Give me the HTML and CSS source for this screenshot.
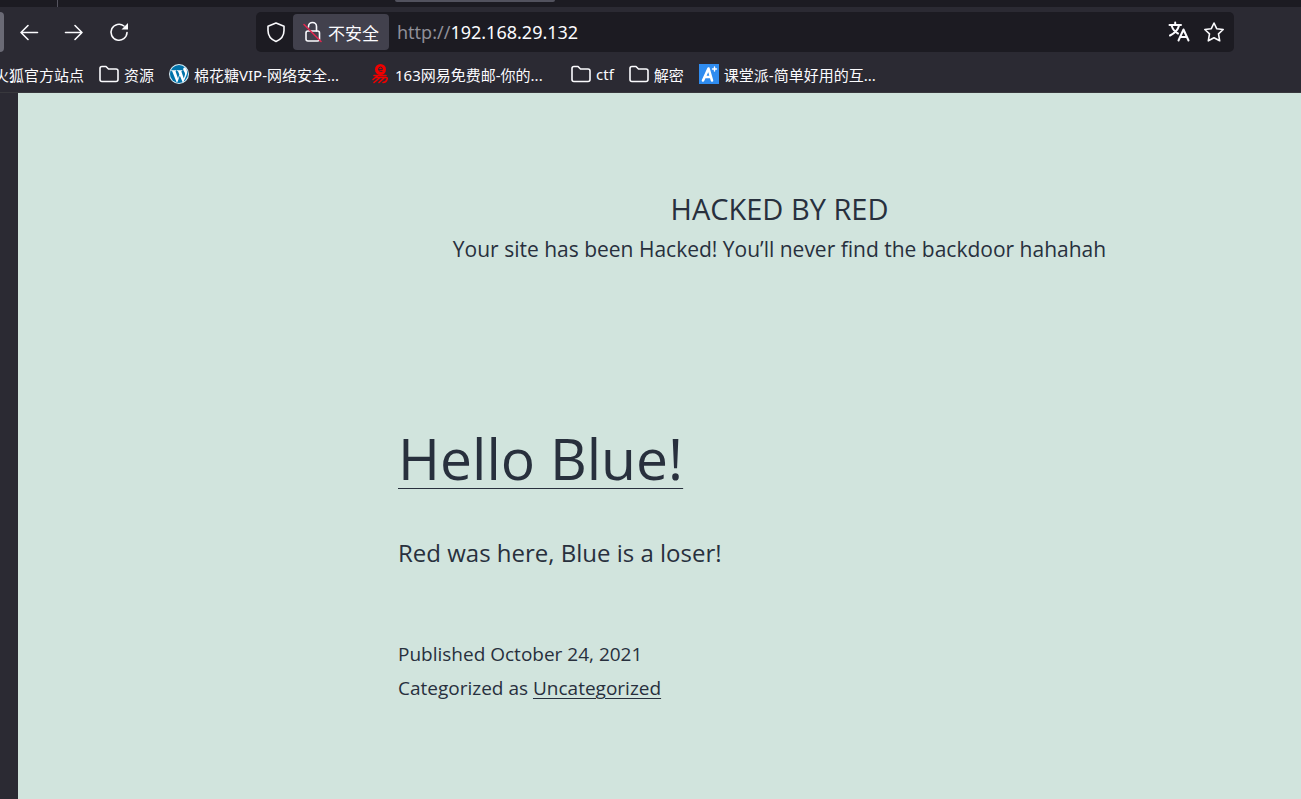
FILE: index.html
```
<!DOCTYPE html>
<html lang="en">

<head>
    <meta charset="UTF-8">
    <meta name="viewport" content="width=device-width, initial-scale=1.0">
    <title>HACKED BY RED</title>
    <link rel="stylesheet" href="styles.css">
</head>

<body>
    <div class="browser" lang="zh-CN">
        <div class="tabstrip">
            <span class="tab-separator"></span>
            <span class="tab-edge"></span>
        </div>

        <div class="toolbar">
            <span class="sidebar-handle"></span>
            <div class="nav-buttons">
                <button type="button" class="icon-button" aria-label="后退">
                    <svg width="20" height="20" viewBox="0 0 20 20"><path d="M18.500 10.500H2M9 3.500L2 10.500L9 17.500" /></svg>
                </button>
                <button type="button" class="icon-button" aria-label="前进">
                    <svg width="20" height="20" viewBox="0 0 20 20"><path d="M1.500 10.500H18M11 3.500L18 10.500L11 17.500" /></svg>
                </button>
                <button type="button" class="icon-button" aria-label="刷新">
                    <svg width="20" height="20" viewBox="0 0 20 20">
                        <path d="M18 10.500A8 8 0 1 1 15 4" />
                        <path class="solid" d="M19 1V7.500H12.500Z" />
                    </svg>
                </button>
            </div>

            <div class="urlbar">
                <svg class="shield" width="20" height="22" viewBox="0 0 20 22">
                    <path d="M10 2L18 5.200V9.500C18 14.500 15 18.500 10 20.500C5 18.500 2 14.500 2 9.500V5.200Z" />
                </svg>
                <button type="button" class="identity">
                    <svg width="20" height="22" viewBox="0 0 20 22">
                        <path d="M5.500 6V5.500A4 4 0 0 1 13.500 5.500V10" />
                        <rect x="3" y="10" width="13.500" height="10" rx="2" />
                        <path class="strike" d="M1 3.500L18 20.500" />
                    </svg>
                    不安全
                </button>
                <label class="scheme" for="url">http://</label>
                <input class="url" id="url" type="text" value="192.168.29.132">
                <button type="button" class="icon-button small" aria-label="翻译">
                    <svg width="22" height="22" viewBox="0 0 22 22">
                        <path class="bold" d="M1.500 4H13M7.200 1.500V4M3.500 4.500C5 9 8 11.500 10 12.500M11 4.500C10 9 6 12.500 2 14.500M10.500 19.500L15.500 8.500L20.500 19.500M12.500 16H18.500" />
                    </svg>
                </button>
                <button type="button" class="icon-button small" aria-label="加入书签">
                    <svg width="22" height="22" viewBox="0 0 22 22">
                        <path d="M11 2L13.700 7.700L20.200 8.500L15.500 12.900L16.700 19.800L11 16.700L5.300 19.800L6.500 12.900L1.800 8.500L8.300 7.700Z" />
                    </svg>
                </button>
            </div>
        </div>

        <nav class="bookmarks">
            <a class="bookmark first" href="#">火狐官方站点</a>
            <a class="bookmark" href="#">
                <svg width="20" height="20" viewBox="0 0 20 20"><path d="M1 15.500V4.500Q1 2.500 3 2.500H7L9.500 5H17Q19 5 19 7V15.500Q19 17.500 17 17.500H3Q1 17.500 1 15.500Z" /></svg>
                资源
            </a>
            <a class="bookmark wide" href="#">
                <svg width="20" height="20" viewBox="0 0 20 20">
                    <circle class="wp" cx="10" cy="10" r="10" />
                    <circle class="wp-ring" cx="10" cy="10" r="9" />
                    <path class="wp-mark" d="M2.200 6.300H7.300V7L6.500 7.200L9 14.500L10.300 10.500L9 7.200L8 7V6.300H13.300V7L12.300 7.200L14.800 14.500L16 10.500C16.500 8.500 14.200 7 14.200 5.300C14.200 4 15.200 3.300 16.200 3.600C18.500 6 18.500 9 17.500 11L14.500 18H13.500L10.800 11.500L8.500 18H7.500L3.200 7.200L2.200 7Z" />
                </svg>
                棉花糖VIP-网络安全...
            </a>
            <a class="bookmark wide" href="#">
                <svg width="20" height="20" viewBox="0 0 20 20">
                    <circle class="red" cx="10.500" cy="5.500" r="5.500" />
                    <path class="red-dark" d="M8.500 5.500H12.500Q12.500 3 10.500 3Q8.500 3 8.500 5.500Q8.500 7.800 12 7.500" />
                    <path class="red-line" d="M4 11.500H16M8 11.500L3 15.500M5.500 13.500H16Q18 13.500 17 15.500Q16 18.500 13 18.500M9.500 14L4 18.500M14 14L9 18.500" />
                </svg>
                163网易免费邮-你的...
            </a>
            <a class="bookmark" href="#">
                <svg width="20" height="20" viewBox="0 0 20 20"><path d="M1 15.500V4.500Q1 2.500 3 2.500H7L9.500 5H17Q19 5 19 7V15.500Q19 17.500 17 17.500H3Q1 17.500 1 15.500Z" /></svg>
                ctf
            </a>
            <a class="bookmark" href="#">
                <svg width="20" height="20" viewBox="0 0 20 20"><path d="M1 15.500V4.500Q1 2.500 3 2.500H7L9.500 5H17Q19 5 19 7V15.500Q19 17.500 17 17.500H3Q1 17.500 1 15.500Z" /></svg>
                解密
            </a>
            <a class="bookmark wide" href="#">
                <svg width="20" height="20" viewBox="0 0 20 20">
                    <rect class="blue" width="20" height="20" />
                    <path class="mark" d="M4 16.500L9.500 4.500L13 16.500M6.500 13H12" />
                    <path class="plus" d="M15.500 3V7M13.500 5H17.500" />
                </svg>
                课堂派-简单好用的互...
            </a>
        </nav>
    </div>

    <div class="page">
        <header class="site-header">
            <h1 class="site-title">HACKED BY RED</h1>
            <p class="site-description">Your site has been Hacked! You’ll never find the backdoor hahahah</p>
        </header>

        <main class="post">
            <h2 class="post-title"><a href="#">Hello Blue!</a></h2>
            <p class="post-text">Red was here, Blue is a loser!</p>
            <footer class="post-meta">
                <p>Published October 24, 2021</p>
                <p>Categorized as <a href="#">Uncategorized</a></p>
            </footer>
        </main>
    </div>
</body>

</html>
```
FILE: styles.css
```
* {
    margin: 0;
    padding: 0;
    box-sizing: border-box;
}

body {
    display: flex;
    flex-direction: column;
    min-height: 100vh;
    overflow-x: hidden;
    background-color: #2b2a33;
    font-family: "Open Sans", "Noto Sans", sans-serif;
}

button,
input {
    border: none;
    background: none;
    color: inherit;
    font: inherit;
}

/* Browser chrome */
.browser {
    color: #fbfbfe;
    font-family: "Noto Sans", "Noto Sans CJK SC", sans-serif;
    border-bottom: 1px solid #38383d;
}

.browser svg {
    flex: none;
    fill: none;
    stroke: #fbfbfe;
    stroke-width: 1.6;
    stroke-linecap: round;
    stroke-linejoin: round;
}

.tabstrip {
    display: flex;
    height: 7px;
    padding-left: 57px;
    background: #1c1b22;
}

.tab-separator {
    width: 1px;
    background: #55545f;
}

.tab-edge {
    width: 160px;
    height: 2px;
    margin-left: 337px;
    border-radius: 0 0 4px 4px;
    background: #52525e;
}

.toolbar {
    display: flex;
    align-items: center;
    height: 50px;
    padding-right: 67px;
}

.sidebar-handle {
    width: 4px;
    height: 40px;
    border-radius: 0 4px 4px 0;
    background: #6a6a75;
}

.nav-buttons {
    display: flex;
    gap: 5px;
    width: 252px;
    padding-left: 5px;
}

.icon-button {
    display: flex;
    align-items: center;
    justify-content: center;
    width: 40px;
    height: 40px;
}

.icon-button.small {
    width: 35px;
}

.urlbar {
    display: flex;
    flex: 1;
    align-items: center;
    height: 40px;
    padding: 0 3px 0 10px;
    border-radius: 5px;
    background: #1c1b22;
    font-size: 18px;
}

.identity {
    display: flex;
    align-items: center;
    gap: 5px;
    height: 36px;
    margin: 0 8px 0 7px;
    padding: 0 10px;
    border-radius: 4px;
    background: #42414d;
    font-size: 17px;
}

.browser .strike {
    stroke: #e22850;
}

.browser .solid {
    fill: #fbfbfe;
    stroke: none;
}

.browser .bold {
    stroke-width: 2;
}

.scheme {
    color: #8f8f98;
}

.url {
    flex: 1;
    min-width: 0;
    height: 36px;
    outline: none;
}

.bookmarks {
    display: flex;
    align-items: center;
    gap: 15px;
    height: 35px;
    padding-bottom: 1px;
    overflow: hidden;
    font-size: 15px;
}

.bookmark {
    display: flex;
    flex: none;
    align-items: center;
    gap: 5px;
    color: inherit;
    text-decoration: none;
    white-space: nowrap;
}

.bookmark.first {
    margin-left: -6px;
}

.bookmark.wide {
    width: 186px;
}

.browser .wp {
    fill: #d5edf8;
    stroke: none;
}

.browser .wp-ring {
    fill: #0073aa;
    stroke: none;
}

.browser .wp-mark {
    fill: #fff;
    stroke: none;
}

.browser .red {
    fill: #f00000;
    stroke: none;
}

.browser .red-dark {
    stroke: #2b2a33;
    stroke-width: 1;
}

.browser .red-line {
    stroke: #f00000;
    stroke-width: 1.6;
}

.browser .blue {
    fill: #2f8cf0;
    stroke: none;
}

.browser .mark {
    stroke: #fff;
    stroke-width: 2.6;
}

.browser .plus {
    stroke: #fff;
    stroke-width: 1.4;
}

/* Blog page */
.page {
    flex: 1;
    margin-left: 18px;
    padding: 96px 140px 80px 380px;
    background-color: #d1e4dd;
    color: #28303d;
}

.page a {
    color: inherit;
}

.site-header {
    text-align: center;
}

.site-title {
    font-size: 29px;
    font-weight: 400;
    line-height: 40px;
}

.site-description {
    font-size: 21px;
    line-height: 40px;
    white-space: nowrap;
}

.post {
    margin-top: 149px;
}

.post-title {
    font-size: 57px;
    font-weight: 400;
    line-height: 80px;
}

.post-title a {
    text-decoration-thickness: 1px;
    text-underline-offset: 8px;
}

.post-text {
    margin-top: 35px;
    font-size: 24px;
    line-height: 40px;
}

.post-meta {
    margin-top: 64px;
    font-size: 19px;
    line-height: 34px;
}

.post-meta a {
    text-decoration-thickness: 1px;
    text-underline-offset: 3px;
}
```
